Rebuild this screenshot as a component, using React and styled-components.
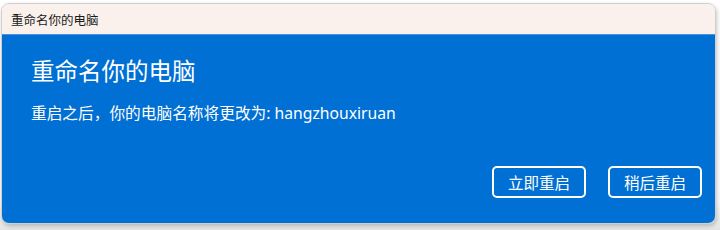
import React from 'react'
import styled, { createGlobalStyle } from 'styled-components';

const Global = createGlobalStyle`
html, body {
margin: 0;
padding: 0;
background: #ffffff;
width: 720px;
height: 230px;
overflow: hidden;
}
* {
box-sizing: border-box;
}`;

const Page = styled.div`
width: 720px;
height: 230px;
padding: 3px 4px 0 1px;
background: linear-gradient(#ffffff 0, #fdfdfd 200px, #e4e4e4 230px);
font-family: "Noto Sans", "Noto Sans CJK SC", sans-serif;`;

const Window = styled.div`
width: 715px;
height: 221px;
border-radius: 8px;
overflow: hidden;
display: flex;
flex-direction: column;
border: 1px solid #cfcfcf;
box-shadow: 1px 2px 4px rgba(0, 0, 0, 0.22);`;

const TitleBar = styled.div`
height: 31px;
flex: none;
background: #faf1ec;
display: flex;
align-items: center;
padding-left: 9px;
font-size: 12.5px;
color: #1b1b1b;
border-bottom: 1px solid #4a92dc;`;

const Body = styled.div`
flex: 1;
background: #0070d4;
display: flex;
flex-direction: column;
padding: 19px 13px 25px 29px;
color: #ffffff;`;

const Heading = styled.div`
font-size: 23.5px;
line-height: 34px;`;

const Message = styled.div`
margin-top: 13px;
font-size: 15.7px;
line-height: 24px;`;

const Actions = styled.div`
margin-top: auto;
display: flex;
justify-content: flex-end;
gap: 22px;`;

const Button = styled.button`
width: 94px;
height: 32px;
border: 2px solid #ffffff;
border-radius: 5px;
background: transparent;
color: #ffffff;
font-family: inherit;
font-size: 15.5px;
padding: 0;
display: flex;
align-items: center;
justify-content: center;`;

const App = () => {
    return (
        <Page>
            <Global />
            <Window>
                <TitleBar>重命名你的电脑</TitleBar>
                <Body>
                    <Heading>重命名你的电脑</Heading>
                    <Message>重启之后，你的电脑名称将更改为: hangzhouxiruan</Message>
                    <Actions>
                        <Button>立即重启</Button>
                        <Button>稍后重启</Button>
                    </Actions>
                </Body>
            </Window>
        </Page>
    )
}

export default App
